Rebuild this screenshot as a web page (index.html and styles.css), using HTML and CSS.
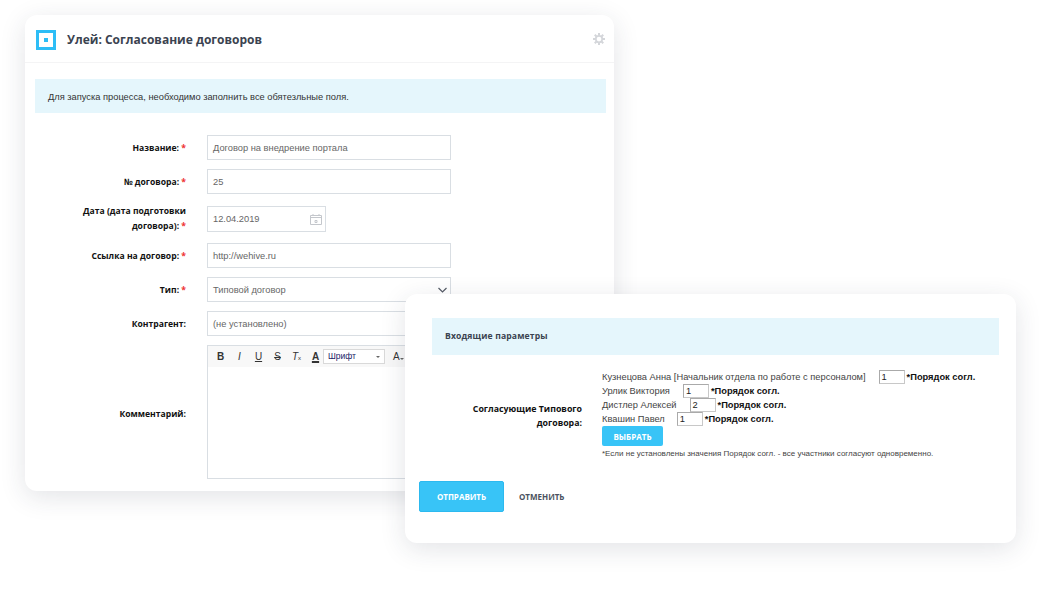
FILE: index.html
```html
<!DOCTYPE html>
<html lang="ru">
<head>
<meta charset="utf-8">
<title>Улей</title>
<link rel="stylesheet" href="styles.css">
</head>
<body>
<section class="window window-main">
  <header class="head">
    <span class="logo"><span class="logo-dot"></span></span>
    <h1 class="title">Улей: Согласование договоров</h1>
    <svg class="gear" width="12" height="12" viewBox="0 0 24 24"><circle cx="12" cy="12" r="6.5" fill="none" stroke="#d4d6da" stroke-width="3.5"/><path fill="none" stroke="#d4d6da" stroke-width="4" d="M12 0v5M12 19v5M0 12h5M19 12h5M3.5 3.5l3.5 3.5M17 17l3.5 3.5M3.5 20.5l3.5-3.5M17 7l3.5-3.5"/></svg>
  </header>
  <div class="notice">Для запуска процесса, необходимо заполнить все обятезльные поля.</div>
  <form class="form">
    <div class="row"><label class="label">Название: <i>*</i></label><div class="field wide">Договор на внедрение портала</div></div>
    <div class="row"><label class="label">№ договора: <i>*</i></label><div class="field wide">25</div></div>
    <div class="row row-date"><label class="label">Дата (дата подготовки<br>договора): <i>*</i></label>
      <div class="field date">12.04.2019
        <svg class="cal" width="12" height="11" viewBox="0 0 12 11"><path fill="none" stroke="#c4c7cc" d="M.5 1.5h11v9H.5zM.5 3.5h11M3 0v2M9 0v2M5 6.5h2v2H5z"/></svg>
      </div></div>
    <div class="row"><label class="label">Ссылка на договор: <i>*</i></label><div class="field wide">http://wehive.ru</div></div>
    <div class="row"><label class="label">Тип: <i>*</i></label><div class="field wide select">Типовой договор
      <svg class="chev" width="9" height="6" viewBox="0 0 9 6"><path fill="none" stroke="#555b66" stroke-width="1.2" d="M.5 1l4 4 4-4"/></svg></div></div>
    <div class="row"><label class="label">Контрагент:</label><div class="field wide">(не установлено)</div></div>
    <div class="row row-editor"><label class="label label-editor">Комментарий:</label>
      <div class="editor">
        <div class="toolbar">
          <b class="tool">B</b><em class="tool tool-i">I</em><u class="tool tool-u">U</u><s class="tool">S</s><span class="tool tool-tx"><em>T</em><small>x</small></span><span class="tool tool-a">A</span>
          <span class="combo">Шрифт<span class="combo-arrow"></span></span>
          <span class="tool-size">A<span class="combo-arrow"></span></span>
        </div>
      </div></div>
  </form>
</section>

<section class="window window-params">
  <h2 class="params-head">Входящие параметры</h2>
  <div class="params">
    <div class="params-label">Согласующие Типового<br>договора:</div>
    <div class="params-body">
      <div class="person">Кузнецова Анна [Начальник отдела по работе с персоналом]<span class="num n1">1</span><b>*Порядок согл.</b></div>
      <div class="person">Урлик Виктория<span class="num n2">1</span><b>*Порядок согл.</b></div>
      <div class="person">Дистлер Алексей<span class="num n2">2</span><b>*Порядок согл.</b></div>
      <div class="person">Квашин Павел<span class="num n4">1</span><b>*Порядок согл.</b></div>
      <button class="pick" type="button">ВЫБРАТЬ</button>
      <p class="hint">*Если не установлены значения Порядок согл. - все участники согласуют одновременно.</p>
    </div>
  </div>
  <div class="actions">
    <button class="send" type="button">ОТПРАВИТЬ</button>
    <button class="cancel" type="button">ОТМЕНИТЬ</button>
  </div>
</section>
</body>
</html>
```
FILE: styles.css
```css
* { box-sizing: border-box; }
html, body { margin: 0; height: 600px; overflow: hidden; background: #fff; }
body { position: relative; font-family: "Liberation Sans", Arial, sans-serif; color: #333; }

.window { position: absolute; background: #fff; border-radius: 12px; box-shadow: 0 6px 26px rgba(40, 50, 70, .13); }
.window-main { left: 25px; top: 15px; width: 589px; height: 476px; }
.window-params { left: 405px; top: 294px; width: 611px; height: 249px; }

.head { display: flex; align-items: center; height: 48px; padding: 0 9px 0 11px; border-bottom: 1px solid #f4f4f5; }
.logo { display: flex; align-items: center; justify-content: center; width: 20px; height: 20px; border: 3px solid #2dbdf6; margin-top: 3px; }
.logo-dot { width: 4px; height: 4px; background: #2dbdf6; }
.title { margin: 1px 0 0 11px; flex: 1; font: 700 12px "Open Sans", sans-serif; color: #3b4350; }
.gear { flex: none; margin-top: 1px; }

.notice { margin: 16px 8px 0 10px; height: 34px; padding-left: 13px; background: #e5f6fc; font-size: 9.3px; line-height: 37px; color: #333; }

.form { margin-top: 22px; }
.row { display: flex; align-items: center; margin-bottom: 9px; }
.row-date { height: 32px; margin-bottom: 8px; }
.row-date .label { line-height: 15px; }
.row-editor { margin-bottom: 0; margin-top: 1px; }
.label { width: 161px; margin-right: 21px; text-align: right; font: 700 8.6px/16px "Open Sans", sans-serif; color: #111; }
.label-editor { padding-top: 3px; }
.label i { font-style: normal; color: #e33; }

.field { position: relative; height: 25px; padding-left: 5px; border: 1px solid #d9dee3; font-size: 9.3px; line-height: 24px; color: #666; }
.wide { width: 244px; }
.date { width: 119px; height: 26px; line-height: 25px; }
.cal { position: absolute; right: 3px; top: 7px; }
.chev { position: absolute; right: 3px; top: 9px; }

.editor { width: 244px; height: 134px; border: 1px solid #d9dee3; }
.toolbar { display: flex; align-items: center; height: 21px; background: #f8f8f8; padding-left: 3px; font-size: 10px; color: #333; }
.tool { width: 19px; flex: none; text-align: center; text-decoration-thickness: 1px; font-weight: 400; }
b.tool { font-weight: 700; }
.tool-tx em { font-size: 10px; }
.tool-tx small { font-size: 6px; }
.tool-a { text-decoration: underline; text-decoration-thickness: 2px; font-weight: 700; }
.combo { position: relative; flex: none; width: 62px; height: 15px; margin-left: -2px; padding-left: 4px; border: 1px solid #d9d9d9; background: #fff; font-size: 8.5px; line-height: 13px; color: #226; }
.combo .combo-arrow { position: absolute; right: 4px; top: 6px; }
.combo-arrow { display: inline-block; border: 2px solid transparent; border-top: 2px solid #666; border-bottom: 0; }
.tool-size { margin-left: 8px; font-size: 10px; }

.params-head { margin: 24px 17px 0 27px; height: 37px; padding-left: 13px; background: #e5f6fc; font: 700 8.6px/37px "Open Sans", sans-serif; letter-spacing: .15px; color: #3b4350; }
.params { display: flex; margin-top: 15px; }
.params-label { width: 177px; margin-top: 32px; text-align: right; font: 700 8.8px/14px "Open Sans", sans-serif; color: #111; }
.params-body { margin-left: 20px; font-size: 9.3px; color: #444; }
.person { display: flex; align-items: center; height: 14px; line-height: 14px; }
.person b { color: #111; font-size: 9.3px; }
.num { display: block; width: 26px; height: 14px; padding-left: 2px; border: 1px solid #c8c8c8; border-top-color: #aaa; border-left-color: #aaa; font-size: 9.3px; line-height: 12px; background: #fff; color: #222; margin-right: 2px; }
.n1, .n2 { margin-left: 13px; }
.n4 { margin-left: 12px; }
.pick { display: block; width: 61px; height: 20px; margin-top: 0; padding: 0; border: 0; border-radius: 2px; background: #38c4f7; color: #fff; font: 700 8px "Open Sans", sans-serif; }
.hint { margin: 2px 0 0; font-size: 8px; line-height: 11px; color: #444; }

.actions { display: flex; align-items: center; margin: 22px 0 0 14px; }
.send { width: 85px; height: 31px; padding: 0; border: 1px solid #2cb9ef; border-radius: 2px; background: #38c4f7; color: #fff; font: 700 8px "Open Sans", sans-serif; }
.cancel { margin-left: 15px; padding: 0; border: 0; background: none; color: #4b5260; font: 700 8px "Open Sans", sans-serif; }
```
